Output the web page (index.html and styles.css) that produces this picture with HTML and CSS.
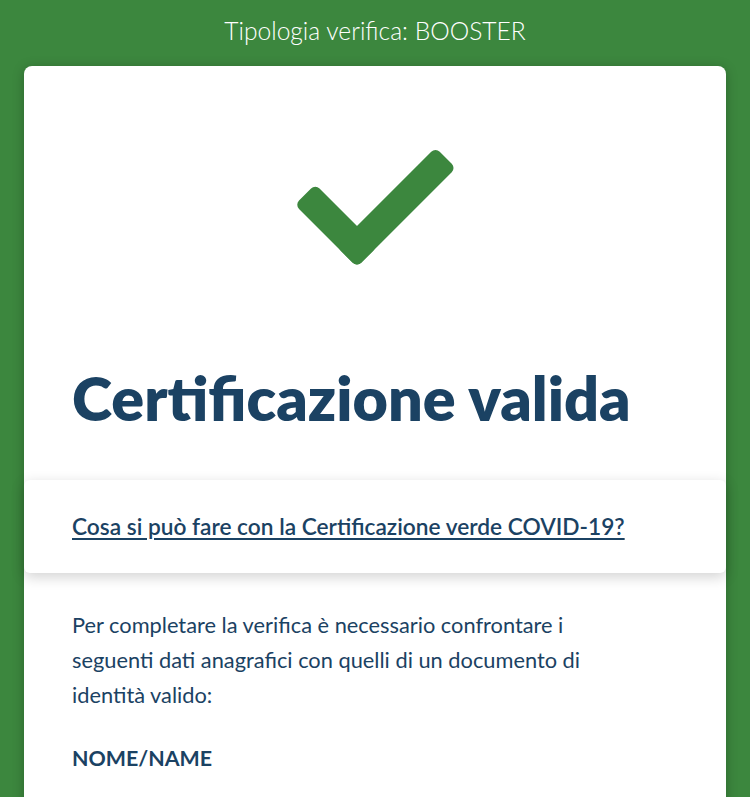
FILE: index.html
```html
<!DOCTYPE html>
<html lang="it">
<head>
<meta charset="utf-8">
<title>Verifica</title>
<link rel="stylesheet" href="styles.css">
</head>
<body>
<header class="top">Tipologia verifica: BOOSTER</header>
<main class="card">
  <div class="icon-wrap">
    <svg class="check" width="164" height="124" viewBox="0 0 164 124" aria-hidden="true">
      <g transform="translate(62 121) rotate(-45)">
        <rect x="0" y="-88" width="29" height="88" rx="6" fill="#3c873e"/>
        <rect x="0" y="-29" width="140" height="29" rx="6" fill="#3c873e"/>
      </g>
    </svg>
  </div>
  <h1 class="title">Certificazione valida</h1>
  <div class="callout">
    <a class="callout-link" href="#">Cosa si può fare con la Certificazione verde COVID-19?</a>
  </div>
  <p class="info">Per completare la verifica è necessario confrontare i seguenti dati anagrafici con quelli di un documento di identità valido:</p>
  <h2 class="label">NOME/NAME</h2>
  <p class="value">Mario Rossi Bianchi</p>
</main>
</body>
</html>
```
FILE: styles.css
```css
html, body {
  margin: 0;
  padding: 0;
}
body {
  background: #3c873e;
  font-family: Lato, "Noto Sans", sans-serif;
  color: #1b4263;
  overflow: hidden;
  height: 797px;
}
.top {
  height: 66px;
  box-sizing: border-box;
  padding-top: 16px;
  text-align: center;
  color: #ffffff;
  font-size: 24.6px;
  line-height: 1.2;
  font-weight: 300;
}
.card {
  margin: 0 24px;
  background: #ffffff;
  border-radius: 8px;
  box-shadow: 0 2px 12px rgba(0, 0, 0, 0.25);
  min-height: 900px;
}
.icon-wrap {
  display: flex;
  justify-content: center;
  padding-top: 80px;
}
.check {
  display: block;
  overflow: visible;
  margin-left: 4px;
}
.title {
  margin: 0;
  padding: 92px 48px 0;
  font-size: 61px;
  line-height: 72px;
  font-weight: 800;
  color: #1b4263;
}
.callout {
  margin-top: 46px;
  height: 93px;
  box-sizing: border-box;
  display: flex;
  align-items: center;
  padding: 0 48px;
  background: #ffffff;
  border-radius: 6px;
  box-shadow: 0 4px 14px rgba(0, 0, 0, 0.18);
}
.callout-link {
  color: #1b4263;
  font-size: 22.7px;
  font-weight: 600;
  text-decoration: underline;
  text-underline-offset: 3px;
}
.info {
  margin: 0;
  padding: 34px 48px 0;
  max-width: 560px;
  font-size: 21.8px;
  line-height: 35px;
}
.label {
  margin: 0;
  padding: 33px 48px 0;
  font-size: 21.4px;
  line-height: 26px;
  font-weight: 700;
}
.value {
  margin: 0;
  padding: 23px 48px 0;
  font-size: 21.4px;
  line-height: 26px;
  color: #d2d2d2;
}
```
